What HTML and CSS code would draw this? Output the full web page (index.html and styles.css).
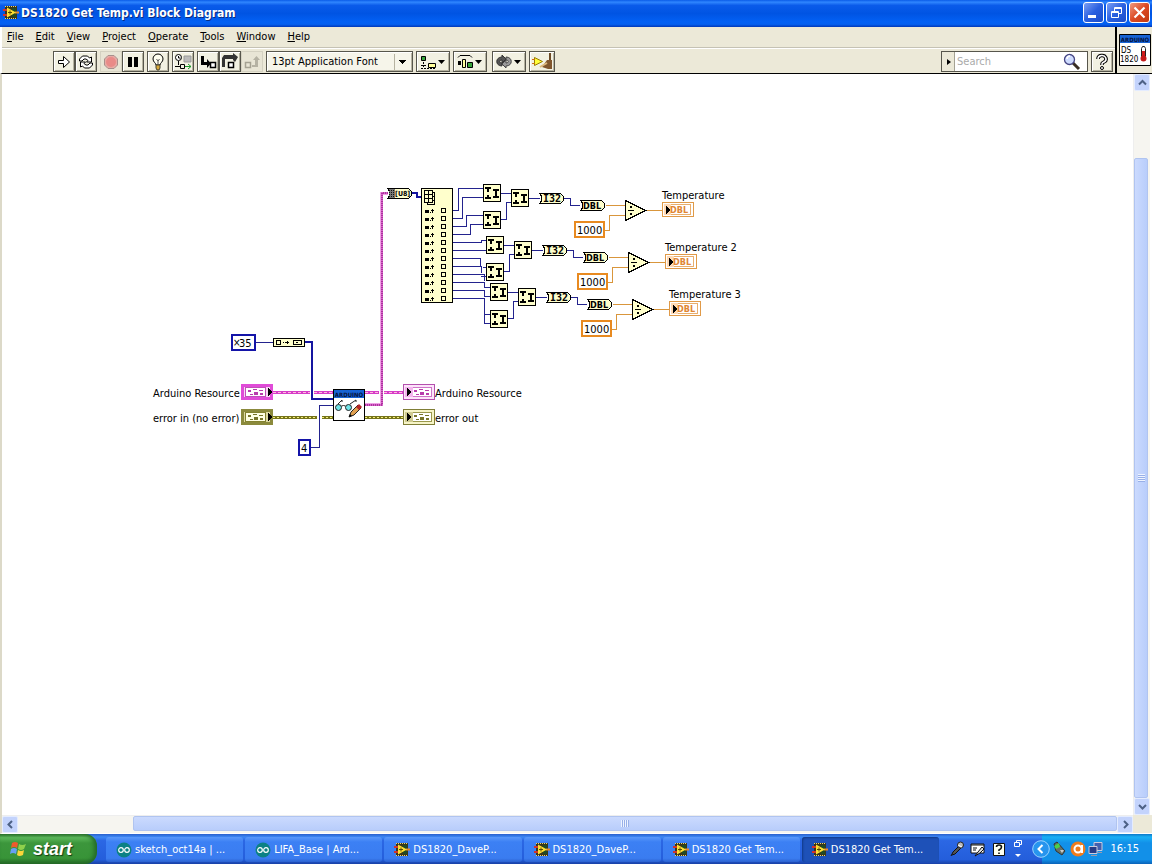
FILE: index.html
```
<!DOCTYPE html>
<html lang="en">
<head>
<meta charset="utf-8">
<title>DS1820 Get Temp.vi Block Diagram</title>
<link rel="stylesheet" href="styles.css">
</head>
<body>
<svg class="defs" aria-hidden="true">
  <defs>
    <g id="lv">
      <path d="M2 1h12v13H2z" fill="#3a3618"/>
      <path d="M2 1.500h12M2 13.500h12" stroke="#f0d468" stroke-dasharray="1 1"/>
      <path d="M9 3h4v9H9z" fill="#1f4a24"/>
      <path d="M0 5h4M0 10h4" stroke="#d0342a" stroke-width="2"/>
      <path d="M12 7.500h4" stroke="#e88a28" stroke-width="2"/>
      <path d="M4 2.500l9 5-9 5z" fill="#ffdf32"/>
      <path d="M5 7.500h4M7 5.500v4" stroke="#5a4808"/>
    </g>
    <g id="ino">
      <circle cx="8" cy="8" r="7.500" fill="#0c8184"/>
      <circle cx="5" cy="8" r="2.300" fill="none" stroke="#fff" stroke-width="1.200"/>
      <circle cx="11" cy="8" r="2.300" fill="none" stroke="#fff" stroke-width="1.200"/>
    </g>
    <g id="join">
      <path d="M.500.500h17v17H.500z" fill="#ffffcc" stroke="#000"/>
      <path d="M2 3h6v2H6v3H4V5H2zM4 11h2v2h2v2H2v-2h2zM10 5h6v2h-2v5h2v2h-6v-2h2V7h-2z" fill="#000"/>
    </g>
    <g id="conv">
      <path d="M.500.500H21.500L24.500 3.500V7.500L21.500 10.500H.500L2.500 8V3z" fill="#ffffcc" stroke="#000"/>
    </g>
    <g id="row">
      <path d="M4 0h4v3H4zM9 2h1v1H9zM11-1h1v4h-1zM10 0h3v1h-3z" fill="#000"/>
      <path d="M20.500-1.500h4v4h-4z" fill="none" stroke="#000"/>
    </g>
    <g id="cluster" fill="currentColor">
      <path d="M0 0h3v2H0zM5-1h4v1H5zM11 0h4v1h-4zM6 2h4v3H6zM2 4h3v1H2zM12 3h3v2h-3z"/>
    </g>
  </defs>
</svg>

<header class="title">
  <svg width="16" height="15" viewBox="0 0 16 15"><use href="#lv"/></svg>
  <h1>DS1820 Get Temp.vi Block Diagram</h1>
  <button class="cap" aria-label="Minimize"><svg width="19" height="19" viewBox="0 0 19 19"><path d="M4 12h8v3H4z" fill="#fff"/></svg></button>
  <button class="cap" aria-label="Restore"><svg width="19" height="19" viewBox="0 0 19 19"><path d="M7.500 8V4.500h7v6H12M4.500 8.500h7v6h-7zM4 9.500h8M7 5.500h8" fill="none" stroke="#fff"/></svg></button>
  <button class="cap close" aria-label="Close"><svg width="19" height="19" viewBox="0 0 19 19"><path d="M4.500 4.500l10 10M14.500 4.500l-10 10" stroke="#fff" stroke-width="2.200"/></svg></button>
</header>

<section class="head">
  <div class="bars">
    <nav class="menu">
      <button><u>F</u>ile</button><button><u>E</u>dit</button><button><u>V</u>iew</button><button><u>P</u>roject</button><button><u>O</u>perate</button><button><u>T</u>ools</button><button><u>W</u>indow</button><button><u>H</u>elp</button>
    </nav>
    <div class="tools">
      <div class="group">
        <button class="tb" aria-label="Run"><svg width="18" height="18" viewBox="0 0 18 18"><path d="M3.500 7.500h5v-4l6 5.500-6 5.500v-4h-5z" fill="#fff" stroke="#000"/></svg></button>
        <button class="tb" aria-label="Run Continuously"><svg width="18" height="18" viewBox="0 0 18 18"><path d="M2.500 8V6l3-3h5l2 2 2-1v5H9.500L11 7.500 9 6H7L5 8zM15.500 10v2l-3 3h-5l-2-2-2 1V9h5L7 10.500 9 12h2l2-2z" fill="#fff" stroke="#000"/></svg></button>
      </div>
      <div class="group">
        <button class="tb off" disabled aria-label="Abort"><svg width="18" height="18" viewBox="0 0 18 18"><path d="M6 2.500h6L15.500 6v6L12 15.500H6L2.500 12V6z" fill="#e8aaa4" stroke="#a8908c"/><circle cx="9" cy="9" r="5" fill="#e98b88"/></svg></button>
        <button class="tb" aria-label="Pause"><svg width="18" height="18" viewBox="0 0 18 18"><path d="M4 4h4v10H4zM10 4h4v10h-4z"/></svg></button>
      </div>
      <div class="group">
        <button class="tb" aria-label="Highlight Execution"><svg width="18" height="18" viewBox="0 0 18 18"><path d="M7 12c0-2-3-3-3-6a5 5 0 0 1 10 0c0 3-3 4-3 6z" fill="#fffff0" stroke="#000"/><path d="M7.500 6l1.500 2 1.500-2M9 8v4" fill="none" stroke="#555"/><path d="M7 12h4v3l-1 2H8l-1-2z" fill="#d8a838" stroke="#443"/></svg></button>
      </div>
      <div class="group">
        <button class="tb" aria-label="Retain Wire Values"><svg width="18" height="18" viewBox="0 0 18 18"><circle cx="4.500" cy="4.500" r="3" fill="#fff" stroke="#000"/><path d="M4.500 3v2h2M4.500 8v4M1 13.500h5M6.500 11.500h4v4h-4z" fill="none" stroke="#000"/><path d="M10 3h7v6h-7z" fill="#bbb" stroke="#999"/><path d="M11 13.500h6M14 11l3 2.500-3 2.500" fill="none" stroke="#1c9c2c"/></svg></button>
      </div>
      <div class="group">
        <button class="tb" aria-label="Step Into"><svg width="18" height="18" viewBox="0 0 18 18"><path d="M2 3h3v6h3V6l4 4.500L8 15v-3H2z"/><path d="M11.500 9.500h5v5h-5z" fill="#fff" stroke="#000" stroke-width="1.500"/></svg></button>
        <button class="tb" aria-label="Step Over"><svg width="18" height="18" viewBox="0 0 18 18"><path d="M1 14V5l2-3h9V0l5 4-3 5-2-2V6H4v8z" fill="#333"/><path d="M7.500 9.500h5v5h-5z" fill="#fff" stroke="#000" stroke-width="1.500"/></svg></button>
        <button class="tb off" disabled aria-label="Step Out"><svg width="18" height="18" viewBox="0 0 18 18"><path d="M2.500 9.500h5v5h-5z" fill="none" stroke="#a5a293" stroke-width="1.500"/><path d="M9 12h3V7h-2l3.500-4L17 7h-2v7H9z" fill="#b5b2a3"/></svg></button>
      </div>
      <select class="font" aria-label="Font"><option>13pt Application Font</option></select>
      <button class="tb wide" aria-label="Align Objects"><svg width="30" height="18" viewBox="0 0 30 18"><path d="M3.500 3.500h4v4h-4z" fill="#36a33a" stroke="#000"/><path d="M10.500 10.500h7v4h-7z" fill="#ffff9c" stroke="#000"/><path d="M5.500 9v5M3 12.500h5M3 15.500h14" fill="none" stroke="#000" stroke-dasharray="2 1"/><path d="M20 7h7l-3.500 4z"/></svg></button>
      <button class="tb wide" aria-label="Distribute Objects"><svg width="30" height="18" viewBox="0 0 30 18"><path d="M3 4.500l2-2h10l2 2" fill="none" stroke="#000"/><path d="M3 8h3v4H3z"/><path d="M7.500 6.500h3v8h-3z" fill="#ffff9c" stroke="#000"/><path d="M12.500 9.500h5v5h-5z" fill="#36a33a" stroke="#000"/><path d="M20 7h7l-3.500 4z"/></svg></button>
      <button class="tb wide gap" aria-label="Reorder"><svg width="30" height="18" viewBox="0 0 30 18"><path d="M8 13C1 13 1 4 8 4V2l4 4-4 4V7c-3 0-3 3 0 3z" fill="#555" stroke="#333"/><path d="M12 4c7 0 7 9 0 9v2l-4-4 4-4v3c3 0 3-3 0-3z" fill="#999" stroke="#444"/><path d="M20 7h7l-3.500 4z"/></svg></button>
      <button class="tb clean" aria-label="Clean Up Diagram"><svg width="22" height="18" viewBox="0 0 22 18"><path d="M3.500 4.500l8 4-8 4z" fill="#ffff39" stroke="#9a7c00"/><path d="M1 6.500h3M1 10.500h3" stroke="#d06e18"/><path d="M18 0h2v8h-2z" fill="#6d4a25"/><path d="M16 7h5v9h-4l-6-2z" fill="#80552d"/><path d="M9 14l7-4" stroke="#ddb77b" stroke-width="2"/></svg></button>
      <div class="search">
        <button aria-label="Search scope"><svg width="7" height="8" viewBox="0 0 7 8"><path d="M2 1l4 3-4 3z"/></svg></button>
        <input type="text" placeholder="Search" aria-label="Search">
        <svg width="18" height="18" viewBox="0 0 18 18"><path d="M10 10l6 6" stroke="#382d23" stroke-width="3"/><circle cx="6.500" cy="6.500" r="5" fill="#cfdcff" stroke="#454583" stroke-width="1.300"/><path d="M4 6a3 3 0 0 1 3-3" fill="none" stroke="#fff" stroke-width="1.500"/></svg>
      </div>
      <button class="tb help" aria-label="Context Help"><svg width="18" height="18" viewBox="0 0 18 18"><path d="M5 6a4 3.500 0 1 1 6 3c-2 1-2 1-2 3" fill="none" stroke="#000" stroke-width="3.600"/><path d="M5 6a4 3.500 0 1 1 6 3c-2 1-2 1-2 3" fill="none" stroke="#fff" stroke-width="1.500"/><circle cx="9" cy="15" r="1.500" fill="#fff" stroke="#000"/></svg></button>
    </div>
  </div>
  <div class="vi">
    <svg width="32" height="32" viewBox="0 0 32 32">
      <path d="M.500.500h31v31H.500z" fill="#fff" stroke="#000"/><path d="M1 1h30v8H1z" fill="#1763d4"/>
      <text x="16" y="8" class="ard" text-anchor="middle">ARDUINO</text>
      <text x="2" y="19" class="px">DS</text><text x="1" y="28" class="px">1820</text>
      <path d="M22.500 14.500l1-2h2l1 2v8h-4z" fill="#fff" stroke="#222"/><path d="M23 17h3v6h-3z" fill="#d01c1c"/><circle cx="24.500" cy="24.500" r="3" fill="#c41a1a"/>
    </svg>
  </div>
</section>

<main class="work">
  <div class="canvas">
    <svg class="diagram" width="760" height="400" viewBox="2 74 760 400" role="img" aria-label="Block diagram">
      <!-- integer wires -->
      <g class="blue">
        <path d="M453 210.500h5.500v-22H484M453 218.500h9.500v-21H484M453 226.500h13.500v-11H484M453 234.500h17.500v-10H484"/>
        <path d="M453 242.500h28.500v-2H486M453 250.500h33M453 258.500h27.500v7M483 267.500h3M453 266.500h28.500v6M481 276.500h5"/>
        <path d="M453 274.500h31.500v6M453 282.500h31.500v5H490M453 290.500h31.500v6H490M453 298.500h31.500v25H490M484 314.500h6"/>
        <path d="M256 342.500h17M311 447.500h8.500v-42H333"/>
      </g>
      <path class="blue thick" d="M304 342h8v57h21M411 193h6v4h4"/>

      <!-- array index node -->
      <path d="M421.500 188.500h31v114h-31z" fill="#ffffcc" stroke="#000"/>
      <path d="M424.500 190.500h8v12h-8zM424 194.500h9M424 198.500h9M428.500 190v13M432 192.500h2.500v12H427v-2M434 196.500h-2M434 200.500h-2" fill="none" stroke="#000"/>
      <use href="#row" x="421" y="210"/><use href="#row" x="421" y="218"/><use href="#row" x="421" y="226"/><use href="#row" x="421" y="234"/><use href="#row" x="421" y="242"/><use href="#row" x="421" y="250"/><use href="#row" x="421" y="258"/><use href="#row" x="421" y="266"/><use href="#row" x="421" y="274"/><use href="#row" x="421" y="282"/><use href="#row" x="421" y="290"/><use href="#row" x="421" y="298"/>

      <!-- string to byte array -->
      <use href="#conv" x="387" y="188"/>
      <path d="M389 189h6v9h-6z" fill="#777"/><path d="M389 190.500h6M389 192.500h6M389 194.500h6M389 196.500h6" stroke="#111" stroke-dasharray="1 1"/>
      <text x="395" y="196" class="u8">[U8]</text>

      <!-- conversion chains, one for each sensor -->
      <g>
        <path class="blue" d="M501 193.500h10M501 219.500h5.500v-17H511M529 198.500h11M564 198.500h6.500v7H580"/>
        <path class="orange" d="M606 205.500h19M605 230.500h4.500v-15H625M646 210.500h16"/>
        <use href="#join" x="483" y="184"/><use href="#join" x="483" y="211"/><use href="#join" x="511" y="189"/>
        <use href="#conv" x="539" y="193"/><text x="543" y="202" class="mono">I32</text>
        <use href="#conv" x="580" y="200"/><text x="583" y="209" class="dbl">DBL</text>
        <path d="M625.500 200.500v20l20-10z" fill="#ffffcc" stroke="#000"/><path d="M628 210.500h6M630 207h2M630 214h2" stroke="#000" stroke-width="1.500"/>
        <path d="M575 222h29v15h-29z" fill="#fff" stroke="#e88a20" stroke-width="2"/><text x="577" y="234" class="lbl">1000</text>
        <path d="M662.500 202.500h31v14h-31z" fill="#fff" stroke="#e09a48"/><path d="M664.500 204.500h26v10h-26z" fill="#fff" stroke="#e9ae6d"/><path d="M664 204h7v11h-7z" fill="#ffd9b4"/><path d="M666 206l4 4-4 4z"/><text x="670" y="213" class="ind">DBL</text>
        <text x="662" y="199" class="lbl">Temperature</text>
      </g>
      <g transform="translate(3 52)">
        <path class="blue" d="M501 193.500h10M501 219.500h5.500v-17H511M529 198.500h11M564 198.500h6.500v7H580"/>
        <path class="orange" d="M606 205.500h19M605 230.500h4.500v-15H625M646 210.500h16"/>
        <use href="#join" x="483" y="184"/><use href="#join" x="483" y="211"/><use href="#join" x="511" y="189"/>
        <use href="#conv" x="539" y="193"/><text x="543" y="202" class="mono">I32</text>
        <use href="#conv" x="580" y="200"/><text x="583" y="209" class="dbl">DBL</text>
        <path d="M625.500 200.500v20l20-10z" fill="#ffffcc" stroke="#000"/><path d="M628 210.500h6M630 207h2M630 214h2" stroke="#000" stroke-width="1.500"/>
        <path d="M575 222h29v15h-29z" fill="#fff" stroke="#e88a20" stroke-width="2"/><text x="577" y="234" class="lbl">1000</text>
        <path d="M662.500 202.500h31v14h-31z" fill="#fff" stroke="#e09a48"/><path d="M664.500 204.500h26v10h-26z" fill="#fff" stroke="#e9ae6d"/><path d="M664 204h7v11h-7z" fill="#ffd9b4"/><path d="M666 206l4 4-4 4z"/><text x="670" y="213" class="ind">DBL</text>
        <text x="662" y="199" class="lbl">Temperature 2</text>
      </g>
      <g transform="translate(7 99)">
        <path class="blue" d="M501 193.500h10M501 219.500h5.500v-17H511M529 198.500h11M564 198.500h6.500v7H580"/>
        <path class="orange" d="M606 205.500h19M605 230.500h4.500v-15H625M646 210.500h16"/>
        <use href="#join" x="483" y="184"/><use href="#join" x="483" y="211"/><use href="#join" x="511" y="189"/>
        <use href="#conv" x="539" y="193"/><text x="543" y="202" class="mono">I32</text>
        <use href="#conv" x="580" y="200"/><text x="583" y="209" class="dbl">DBL</text>
        <path d="M625.500 200.500v20l20-10z" fill="#ffffcc" stroke="#000"/><path d="M628 210.500h6M630 207h2M630 214h2" stroke="#000" stroke-width="1.500"/>
        <path d="M575 222h29v15h-29z" fill="#fff" stroke="#e88a20" stroke-width="2"/><text x="577" y="234" class="lbl">1000</text>
        <path d="M662.500 202.500h31v14h-31z" fill="#fff" stroke="#e09a48"/><path d="M664.500 204.500h26v10h-26z" fill="#fff" stroke="#e9ae6d"/><path d="M664 204h7v11h-7z" fill="#ffd9b4"/><path d="M666 206l4 4-4 4z"/><text x="670" y="213" class="ind">DBL</text>
        <text x="662" y="199" class="lbl">Temperature 3</text>
      </g>

      <!-- resource and error wires -->
      <path d="M273 392.500h37M314 392.500h19M365 392.500h14M384 392.500h19" stroke="#d63cc8" stroke-width="3"/>
      <path d="M273 392.500h37M314 392.500h19M365 392.500h14M384 392.500h19" stroke="#fbd" stroke-dasharray="3 2"/>
      <path d="M273 417.500h44M322 417.500h11M365 417.500h38" stroke="#75731a" stroke-width="3"/>
      <path d="M273 417.500h44M322 417.500h11M365 417.500h38" stroke="#f4f078" stroke-dasharray="2 2"/>
      <path d="M365 404.500h16.500V193.500h6" fill="none" stroke="#f0a0e6" stroke-width="3"/>
      <path d="M365 405h17V193h6" fill="none" stroke="#d468c8" stroke-width="2"/>
      <path d="M365 405h17V193h6" fill="none" stroke="#b030a0" stroke-width="2" stroke-dasharray="1 1"/>

      <!-- constants -->
      <path d="M232 335h23v15h-23zM299 440h11v15h-11z" fill="#fff" stroke="#1414a8" stroke-width="2"/>
      <text x="233" y="346" class="x">×</text><text x="239" y="347" class="lbl">35</text><text x="301" y="452" class="lbl">4</text>
      <path d="M273.500 338.500h31v8h-31z" fill="#ffffcc" stroke="#000"/>
      <path d="M276.500 340.500h4v4h-4zM293.500 340.500h8v4h-8zM283 342.500h1M285 342.500h4M287.500 341v3M296 342.500h2" fill="none" stroke="#000"/>

      <!-- controls -->
      <path d="M242.500 385.500h29v13h-29z" fill="#f8d4f4" stroke="#e04cd8" stroke-width="3"/><path d="M245.500 387.500h20v9h-20z" fill="#fff" stroke="#c050b8"/><use href="#cluster" x="248" y="390" color="#b83cac"/><path d="M268 388l4 4-4 4z"/>
      <path d="M242.500 410.500h29v13h-29z" fill="#dcd8a0" stroke="#8b8a3c" stroke-width="3"/><path d="M245.500 412.500h20v9h-20z" fill="#ffffe4" stroke="#838230"/><use href="#cluster" x="248" y="415" color="#77752a"/><path d="M268 413l4 4-4 4z"/>
      <!-- indicators -->
      <path d="M403.500 384.500h31v15h-31z" fill="#fce4fa" stroke="#b450ae"/><path d="M406.500 387.500h25v9h-25z" fill="#fff" stroke="#cf74c8"/><path d="M405 387h8v10h-8z" fill="#f4b4ee"/><use href="#cluster" x="414" y="390" color="#b83cac"/><path d="M407 388l4 4-4 4z"/>
      <path d="M403.500 409.500h31v15h-31z" fill="#f6f4c8" stroke="#7f7e36"/><path d="M406.500 412.500h25v9h-25z" fill="#fff" stroke="#9a984c"/><path d="M405 412h8v10h-8z" fill="#cfcb90"/><use href="#cluster" x="414" y="415" color="#77752a"/><path d="M407 413l4 4-4 4z"/>
      <text x="153" y="397" class="lbl">Arduino Resource</text><text x="153" y="422" class="lbl">error in (no error)</text>
      <text x="435" y="397" class="lbl">Arduino Resource</text><text x="435" y="422" class="lbl">error out</text>

      <!-- Arduino read sub-VI -->
      <path d="M333.500 389.500h31v31h-31z" fill="#fff" stroke="#000"/><path d="M334 390h30v8h-30z" fill="#1763d4"/>
      <text x="349" y="397" class="ard" text-anchor="middle">ARDUINO</text>
      <g class="smooth" fill="none" stroke="#222"><circle cx="338.500" cy="407.500" r="3" fill="#70e4e8"/><circle cx="348.500" cy="407.500" r="3" fill="#70e4e8"/><path d="M338 404l4-4v2M350 404l6-4v2M341.500 406q2-1 4 0"/></g>
      <g class="smooth"><path d="M349 417l2-5 7-7 3 3-7 7z" fill="#e0a050" stroke="#222"/><path d="M356 407l3-3 3 3-3 3z" fill="#b52424"/><path d="M349 417l1-3 2 2z"/></g>
    </svg>
  </div>
  <div class="vbar">
    <button class="sb" aria-label="Scroll up"><svg width="9" height="9" viewBox="0 0 9 9"><path d="M1 6.500l3.500-3.500 3.500 3.500" fill="none" stroke="#4d6185" stroke-width="2"/></svg></button>
    <div class="vtrack"><div class="vthumb"><i></i></div></div>
    <button class="sb" aria-label="Scroll down"><svg width="9" height="9" viewBox="0 0 9 9"><path d="M1 3l3.500 3.500L8 3" fill="none" stroke="#4d6185" stroke-width="2"/></svg></button>
  </div>
  <div class="hbar">
    <button class="sb" aria-label="Scroll left"><svg width="9" height="9" viewBox="0 0 9 9"><path d="M6 1L2.500 4.500 6 8" fill="none" stroke="#4d6185" stroke-width="2"/></svg></button>
    <div class="htrack"><div class="hthumb"><i></i></div></div>
    <button class="sb" aria-label="Scroll right"><svg width="9" height="9" viewBox="0 0 9 9"><path d="M3 1l3.500 3.500L3 8" fill="none" stroke="#4d6185" stroke-width="2"/></svg></button>
  </div>
  <div class="corner"></div>
</main>

<footer class="taskbar">
  <button class="start"><svg width="20" height="20" viewBox="0 0 20 20"><path d="M3 4q3-2 6 0L8 9Q5 7 2 9z" fill="#ee5a2c"/><path d="M10 5q3 2 7 0l-2 5q-3 2-6 0z" fill="#8fd04c"/><path d="M2 10q3-2 6 0l-1 5q-3-2-6 0z" fill="#67a0f4"/><path d="M9 11q3 2 6 0l-1 5q-4 2-6 0z" fill="#fbd63a"/></svg>start</button>
  <div class="tasks">
    <button><svg width="16" height="16" viewBox="0 0 16 16"><use href="#ino"/></svg>sketch_oct14a | ...</button>
    <button><svg width="16" height="16" viewBox="0 0 16 16"><use href="#ino"/></svg>LIFA_Base | Ard...</button>
    <button><svg width="16" height="15" viewBox="0 0 16 15"><use href="#lv"/></svg>DS1820_DaveP...</button>
    <button><svg width="16" height="15" viewBox="0 0 16 15"><use href="#lv"/></svg>DS1820_DaveP...</button>
    <button><svg width="16" height="15" viewBox="0 0 16 15"><use href="#lv"/></svg>DS1820 Get Tem...</button>
    <button class="on"><svg width="16" height="15" viewBox="0 0 16 15"><use href="#lv"/></svg>DS1820 Get Tem...</button>
  </div>
  <div class="lang">
    <svg width="16" height="18" viewBox="0 0 16 18"><path d="M2 16l2-4 6-6 2 2-6 6-3 1" fill="#555" stroke="#111"/><circle cx="11.500" cy="5" r="3" fill="#bbb" stroke="#222"/><path d="M9 5l4 2" stroke="#fff"/></svg>
    <svg width="16" height="18" viewBox="0 0 16 18"><path d="M1 4h13v9H1z" fill="#fff" stroke="#111"/><path d="M1 5h13M3 8h4M3 10h3" stroke="#111"/><path d="M5 16l3-4 4-5 2 2-4 4z" fill="#ddd" stroke="#111"/></svg>
    <svg width="16" height="18" viewBox="0 0 16 18"><path d="M2.500 3.500h11v12h-11z" fill="#fffff0" stroke="#111"/><path d="M5.500 7q0-2 2.500-2t2.500 2-2.500 3v1M8 12.500v1.500" fill="none" stroke="#111" stroke-width="1.600"/></svg>
    <svg width="12" height="22" viewBox="0 0 12 22"><path d="M4.500 5V2.500h5v4H8M2.500 4.500h5v4h-5z" fill="none" stroke="#fff"/><path d="M3 16h6l-3 3z" fill="#fff"/></svg>
  </div>
  <div class="tray">
    <button aria-label="Show hidden icons"><svg width="18" height="18" viewBox="0 0 18 18"><circle cx="9" cy="9" r="8.300" fill="#2795ee" stroke="#9ad4ff"/><path d="M10.500 5L6.500 9l4 4" fill="none" stroke="#fff" stroke-width="2"/></svg></button>
    <svg width="16" height="16" viewBox="0 0 16 16"><path d="M2 3l3-2 8 9-3 4-6-4z" fill="#667266" stroke="#333"/><path d="M2 5l5-3 1 4-4 2z" fill="#4ad04a"/><path d="M8 9l4 0-2 3z" fill="#ccc"/></svg>
    <svg width="16" height="16" viewBox="0 0 16 16"><circle cx="8" cy="8" r="7.500" fill="#f07c1c"/><circle cx="8" cy="8" r="3.500" fill="none" stroke="#fff" stroke-width="2"/><path d="M12 4v8" stroke="#fff" stroke-width="2"/></svg>
    <svg width="16" height="16" viewBox="0 0 16 16"><path d="M6 1.500h8v8H6z" fill="#4360ae" stroke="#ccd"/><path d="M1 5.500h8v7H1z" fill="#263c86" stroke="#ccd"/><path d="M3 14.500h6M10 11.500h4" stroke="#99a"/></svg>
    <time>16:15</time>
  </div>
</footer>
</body>
</html>
```
FILE: styles.css
```
* { box-sizing: border-box; }
body { margin: 0; height: 100vh; display: flex; flex-direction: column; overflow: hidden; background: #ece9d8; color: #000; font: 11px/16px "DejaVu Sans Condensed", Tahoma, sans-serif; }
button, input, select { font: inherit; color: inherit; margin: 0; padding: 0; border: 0; background: none; }
svg { display: block; flex: none; }
.defs { position: absolute; width: 0; height: 0; }

.title { flex: none; height: 27px; display: flex; align-items: center; gap: 2px; padding: 0 2px 2px 3px; background: linear-gradient(#0a5ce8, #2f86ff 8%, #0a5bea 20%, #0054e3 50%, #0360f4 80%, #0560f0 90%, #0238b8); }
.title h1 { flex: 1; margin: 0; color: #fff; font: bold 12px/16px "DejaVu Sans Condensed", sans-serif; text-shadow: 1px 1px #0a2c80; }
.cap { width: 21px; height: 21px; border: 1px solid #fff; border-radius: 3px; background: linear-gradient(135deg, #7c9ff4, #2a60e0 50%, #1c4cc8); }
.close { background: linear-gradient(135deg, #f09a80, #dc4a24 50%, #c03810); }

.head { flex: none; display: flex; border-left: 2px solid #fff; border-bottom: 1px solid #000; }
.bars { flex: 1; }
.menu { height: 21px; display: flex; align-items: center; gap: 12px; padding-left: 5px; border-bottom: 1px solid #c5c2b4; }
.tools { height: 25px; display: flex; align-items: center; padding: 1px 2px 0 51px; gap: 3px; border-top: 1px solid #fff; }
.group { display: flex; }
.tb { width: 22px; height: 21px; display: flex; align-items: center; justify-content: center; border: 1px solid #57564c; box-shadow: inset 1px 1px #fff, inset -1px -1px #b6b3a1; background: #f2f1e2; }
.off { border-color: #d4d1c1; box-shadow: none; background: #e8e5d5; }
.wide { width: 34px; }
.clean { width: 26px; }
.gap { margin-left: 2px; }
.font { width: 147px; height: 21px; padding-left: 5px; appearance: none; border: 1px solid #57564c; border-radius: 0; box-shadow: inset 1px 1px #fff, inset -1px -1px #b6b3a1; background: linear-gradient(45deg, transparent 50%, #000 50%) 132px 8px / 4px 4px no-repeat, linear-gradient(315deg, transparent 50%, #000 50%) 136px 8px / 4px 4px no-repeat, linear-gradient(#b6b3a1, #b6b3a1) 127px 2px / 1px 16px no-repeat, #f6f5ea; }
.search { width: 147px; height: 21px; margin-left: auto; display: flex; align-items: center; gap: 2px; padding-right: 6px; border: 1px solid #57564c; background: #fff; }
.search button { width: 13px; height: 19px; display: grid; place-items: center; border-right: 1px solid #a5a293; background: #ece9d8; }
.search input { flex: 1; min-width: 0; outline: 0; }
.search input::placeholder { color: #aaa; opacity: 1; }
.vi { width: 37px; display: flex; align-items: center; justify-content: center; border-left: 2px solid #000; }

.work { flex: 1; min-height: 0; display: grid; grid-template: 1fr 18px / 1fr 19px; border-left: 2px solid #dcd9c8; border-bottom: 1px solid #fff; }
.canvas { overflow: hidden; background: #fff; }
.diagram { shape-rendering: crispEdges; }
.smooth { shape-rendering: auto; }
.blue { fill: none; stroke: #23238e; }
.thick { stroke: #1515a0; stroke-width: 2; }
.orange { fill: none; stroke: #d9963c; }
.lbl { font: 11px "DejaVu Sans Condensed", sans-serif; }
.x { font: 10px "DejaVu Sans Condensed", sans-serif; }
.mono { font: bold 10px "DejaVu Sans Mono", monospace; }
.dbl { font: bold 9px "DejaVu Sans Condensed", sans-serif; }
.ind { font: bold 9px "DejaVu Sans Condensed", sans-serif; fill: #e08634; }
.u8 { font: bold 7px "DejaVu Sans Condensed", sans-serif; }
.ard { font: bold 6px "DejaVu Sans Condensed", sans-serif; fill: #04123c; }
.px { font: 8px "DejaVu Sans Condensed", sans-serif; }

.vbar, .hbar { display: flex; background: #f6f5f0; }
.vbar { flex-direction: column; border-left: 1px solid #eee; border-right: 2px solid #fff; }
.hbar { border-top: 1px solid #eee; }
.sb { width: 16px; height: 17px; flex: none; display: grid; place-items: center; border: 1px solid #e4ecff; border-radius: 2px; background: #c3d3fc; }
.vtrack, .htrack { flex: 1; display: flex; justify-content: flex-end; }
.vtrack { flex-direction: column; }
.vthumb { height: 90.5%; display: grid; place-items: center; border: 1px solid #b0c4f0; border-radius: 2px; margin-right: 2px; background: linear-gradient(90deg, #cbdafe, #b8cdfb); }
.hthumb { width: 89.5%; display: grid; place-items: center; border: 1px solid #b0c4f0; border-radius: 2px; margin-bottom: 2px; background: linear-gradient(#cbdafe, #b8cdfb); }
.vthumb i { width: 7px; height: 8px; background: repeating-linear-gradient(#eef4ff 0 1px, #98b0e8 1px 2px); }
.hthumb i { width: 8px; height: 7px; background: repeating-linear-gradient(90deg, #eef4ff 0 1px, #98b0e8 1px 2px); }
.corner { background: #ece9d8; }

.taskbar { flex: none; height: 30px; display: flex; color: #fff; background: linear-gradient(#2a60cc, #3d88f5 10%, #2b67e4 22%, #245edb 85%, #1941a5); }
.start { width: 97px; display: flex; align-items: center; gap: 4px; padding-left: 9px; border-radius: 0 12px 12px 0; font: italic bold 18px/24px "Liberation Sans", sans-serif; text-shadow: 1px 1px 1px #123c12; background: linear-gradient(#2f7a30, #5cb85a 12%, #3c963c 30%, #389438 80%, #236823); box-shadow: inset -3px 0 4px #246a28; }
.tasks { flex: 1; min-width: 0; display: grid; grid-template-columns: repeat(6, 1fr); gap: 2px; padding: 3px 0 2px 9px; }
.tasks button { display: flex; align-items: center; gap: 3px; padding-left: 10px; border-radius: 3px; text-align: left; white-space: nowrap; overflow: hidden; background: linear-gradient(#5a98fa, #3c80f4 20%, #3a7cf0 85%, #2c62d0); }
.tasks .on { background: #1e51b8; box-shadow: inset 1px 1px 2px #123a88; }
.lang { width: 93px; display: flex; align-items: center; gap: 5px; padding-left: 10px; }
.tray { width: 120px; display: flex; align-items: center; gap: 2px; background: linear-gradient(#0d78c8, #19b0f5 10%, #1290e8 30%, #1290e8 85%, #0a62b8) 10px 0 no-repeat; }
.tray time { margin-left: auto; padding-right: 13px; }
```
